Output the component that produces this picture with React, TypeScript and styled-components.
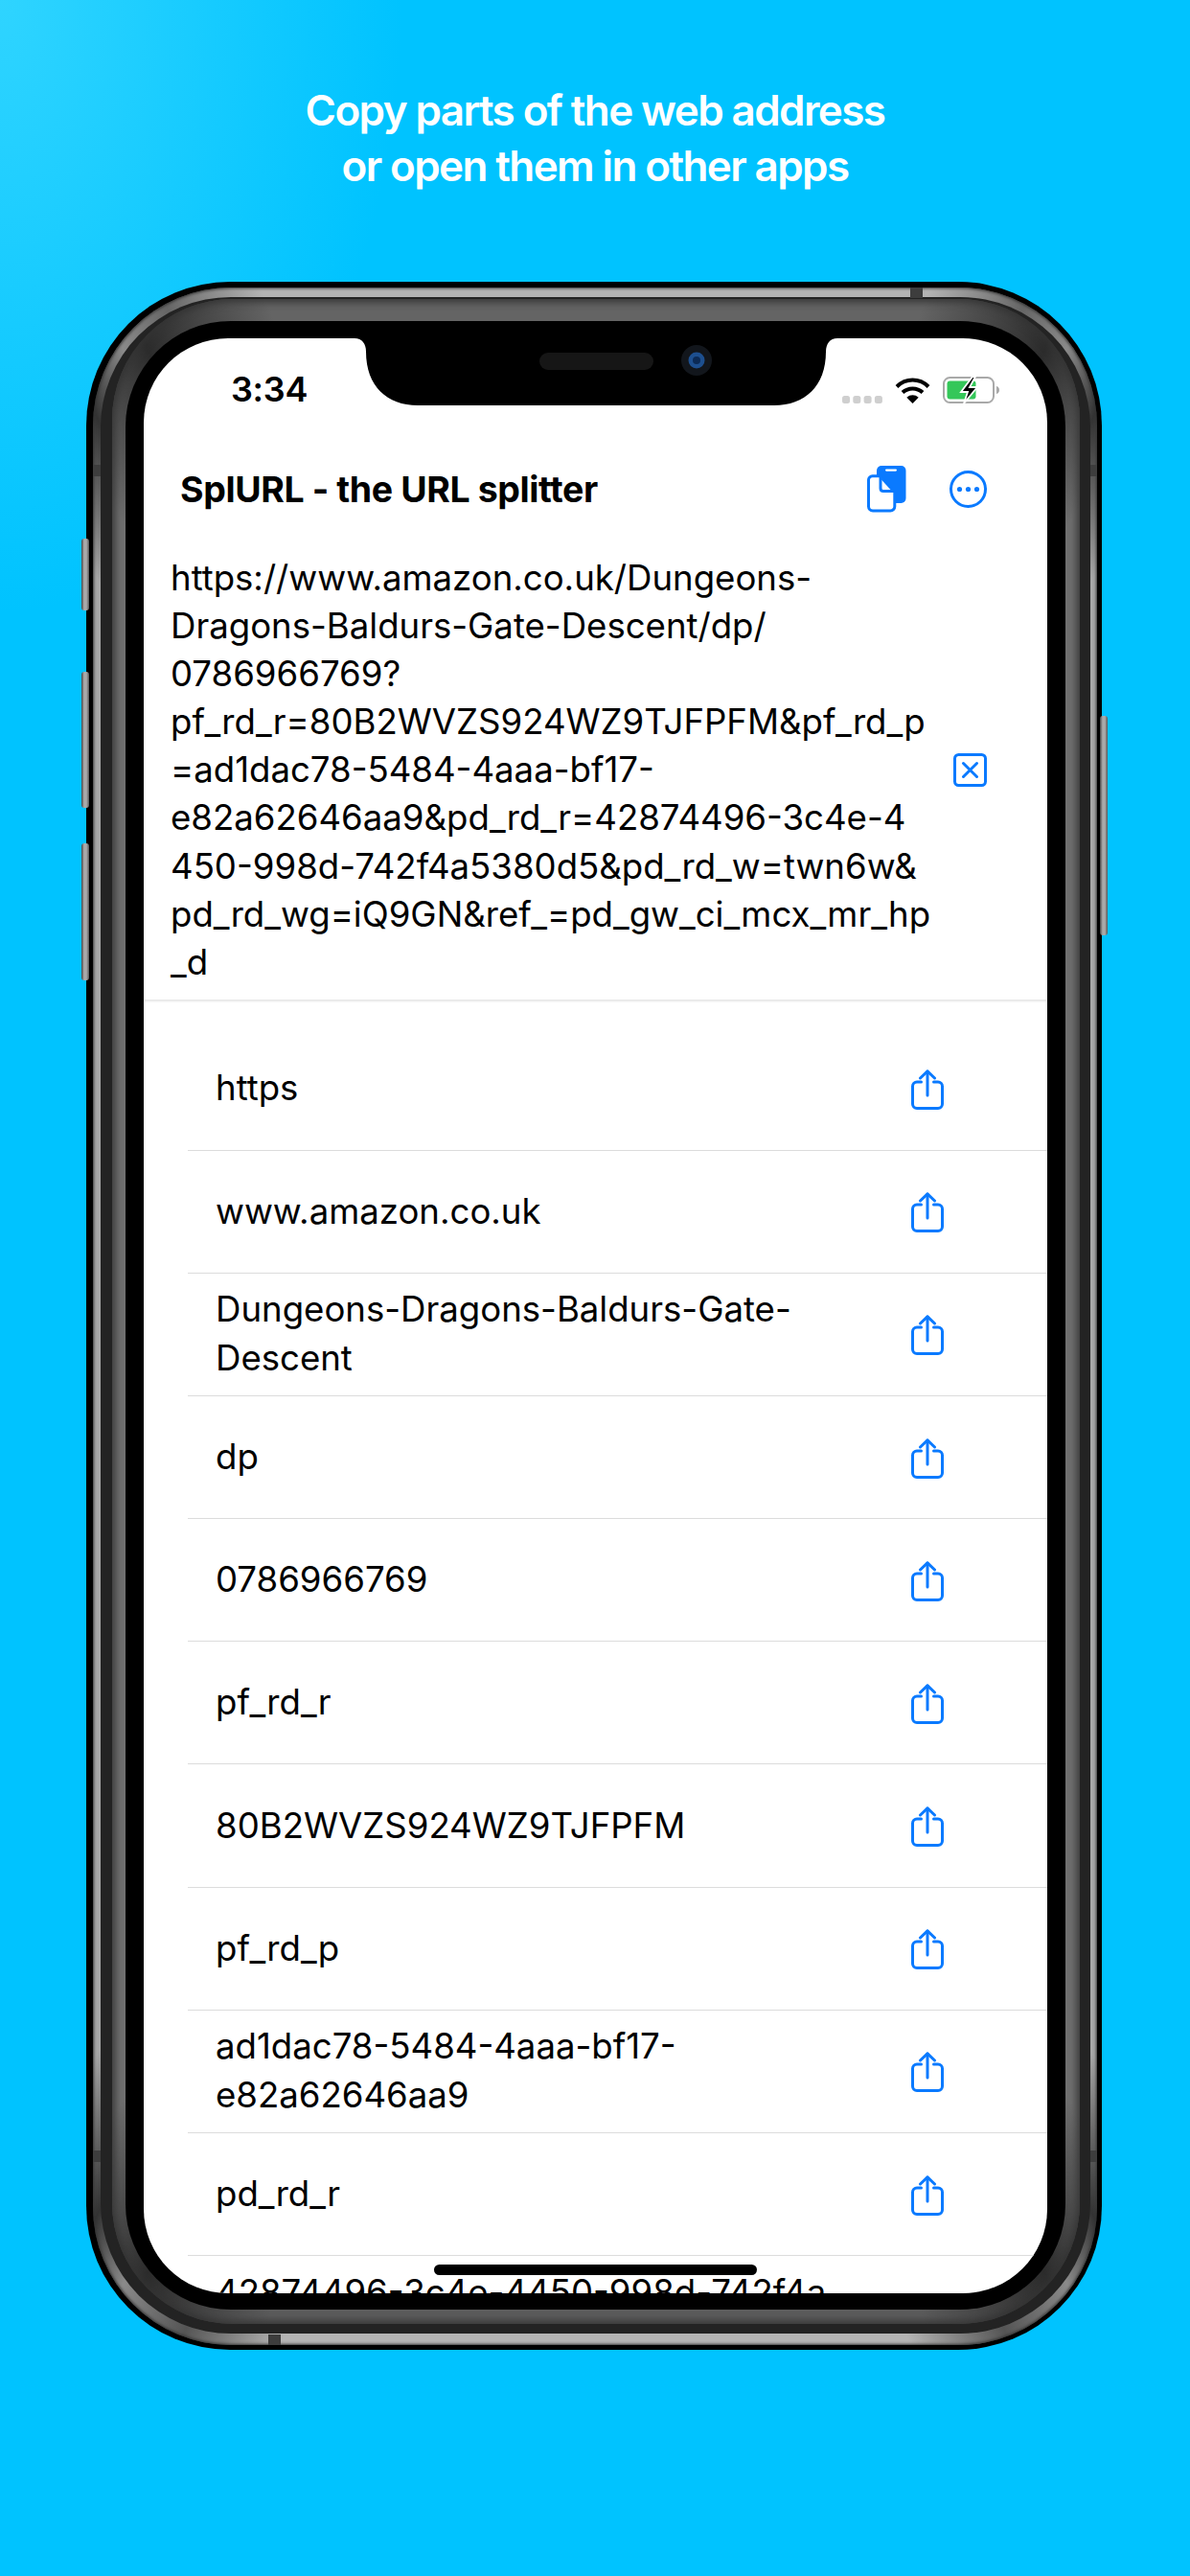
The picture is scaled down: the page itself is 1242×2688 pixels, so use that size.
import React from "react";
import styled, { createGlobalStyle } from "styled-components";

const Global = createGlobalStyle`
  html, body { margin: 0; padding: 0; background: #00c3ff; }
  * { box-sizing: border-box; }
`;

const BLUE = "#0a7aff";

const Page = styled.div`
  width: 1242px;
  height: 2688px;
  overflow: hidden;
  background:
    radial-gradient(ellipse 420px 640px at 0 0, #2fd4ff 0%, rgba(47, 212, 255, 0) 100%),
    #00c3ff;
  font-family: Inter, "Liberation Sans", sans-serif;
`;

const Headline = styled.h1`
  margin: 0;
  padding-top: 86px;
  height: 294px;
  text-align: center;
  color: #fff;
  font-size: 44px;
  line-height: 58px;
  font-weight: 600;
  letter-spacing: -1.6px;
`;

const Phone = styled.div`
  position: relative;
  width: 1060px;
  margin-left: 90px;
`;

const Shell = styled.div`
  background: #000;
  border-radius: 150px;
  padding: 6px 5px 5px 7px;
`;

const MetalBand = styled.div`
  border-radius: 144px;
  padding: 10px 7px 12px 8px;
  background: conic-gradient(
    #b4b4b4 0deg 18deg, #666 23deg, #8a8a8a 26deg, #333 29deg, #a6a6a6 34deg,
    #a6a6a6 146deg, #333 151deg, #8a8a8a 154deg, #555 158deg, #b4b4b4 163deg,
    #b4b4b4 197deg, #555 202deg, #8a8a8a 206deg, #333 209deg, #a6a6a6 214deg,
    #a6a6a6 326deg, #333 331deg, #8a8a8a 334deg, #666 337deg, #b4b4b4 342deg
  );
  box-shadow: inset 0 0 3px 1px #333;
`;

const DarkBand = styled.div`
  background: #232323;
  border-radius: 136px;
  padding: 2px 11px 10px 12px;
`;

const GreyBand = styled.div`
  border-radius: 126px;
  padding: 23px 15px 15px 14px;
  background: conic-gradient(
    #646464 0deg 18deg, #2c2c2c 25deg, #707070 31deg,
    #707070 149deg, #2c2c2c 155deg, #5c5c5c 162deg,
    #5c5c5c 198deg, #2c2c2c 205deg, #707070 211deg,
    #707070 329deg, #2c2c2c 335deg, #646464 342deg
  );
  box-shadow: inset 0 0 8px 3px #333;
`;

const BlackBezel = styled.div`
  background: #000;
  border-radius: 110px;
  padding: 18px 19.5px 17px 19px;
`;

const Screen = styled.div`
  position: relative;
  height: 2040px;
  background: #fff;
  border-radius: 88px;
  overflow: hidden;
  display: flex;
  flex-direction: column;
`;

const SideButton = styled.div<{ $top: number; $h: number; $right?: boolean }>`
  position: absolute;
  top: ${(p) => p.$top}px;
  height: ${(p) => p.$h}px;
  width: 8px;
  ${(p) => (p.$right ? "right: -6px;" : "left: -5px;")}
  border-radius: 3px;
  background: linear-gradient(90deg, #444 0%, #aaa 35%, #aaa 65%, #555 100%);
`;

const Antenna = styled.div<{ $x?: number; $y?: number; $side?: "left" | "right" }>`
  position: absolute;
  background: #3d3d3d;
  ${(p) =>
    p.$side
      ? `top: ${p.$y}px; ${p.$side === "left" ? "left: 7px; width: 8px;" : "right: 5px; width: 7px;"} height: 12px;`
      : `left: ${p.$x}px; top: ${p.$y}px; width: 13px; height: 11px;`}
`;

const Notch = styled.svg`
  position: absolute;
  left: 220px;
  top: 0;
`;

const StatusBar = styled.div`
  height: 105px;
  flex: none;
  display: flex;
  align-items: center;
  justify-content: space-between;
  padding: 0 49px 0 91px;
`;

const Time = styled.div`
  font-size: 36px;
  font-weight: 600;
  letter-spacing: -0.3px;
  color: #000;
`;

const StatusIcons = styled.div`
  display: flex;
  align-items: center;
  gap: 13px;
  margin-top: 2px;
`;

const Signal = styled.svg`
  margin-top: 20px;
`;

const TopSection = styled.div`
  position: relative;
  z-index: 1;
  flex: none;
  background: #fff;
  box-shadow: 0 2px 2px rgba(0, 0, 0, 0.1);
`;

const NavBar = styled.div`
  height: 104px;
  display: flex;
  align-items: center;
  justify-content: space-between;
  padding: 0 63px 0 38px;
`;

const Title = styled.div`
  font-size: 37.5px;
  font-weight: 700;
  letter-spacing: -0.4px;
  color: #000;
`;

const NavActions = styled.div`
  display: flex;
  align-items: center;
  gap: 45px;
`;

const UrlRow = styled.div`
  display: flex;
  align-items: center;
  justify-content: space-between;
  padding: 16px 63px 14px 28px;

  svg {
    flex: none;
  }
`;

const UrlText = styled.div`
  font-size: 36.6px;
  line-height: 50.1px;
  color: #000;
  white-space: pre;
  font-weight: 400;
`;

const RowList = styled.div`
  flex: 1;
  min-height: 0;
  overflow: hidden;
  padding: 29.5px 0 0 46px;
`;

const Row = styled.div`
  height: 128.2px;
  flex: none;
  display: flex;
  align-items: center;
  justify-content: space-between;
  padding: 0 108px 0 29px;
  border-bottom: 1.5px solid #dcdcdc;

  &:last-child {
    border-bottom: 0;
  }

  svg {
    flex: none;
    margin-top: 2px;
  }
`;

const RowText = styled.div`
  font-size: 36.6px;
  line-height: 51px;
  color: #000;
  white-space: pre-line;
`;

const HomeBar = styled.div`
  position: absolute;
  left: 303px;
  top: 2010px;
  width: 337px;
  height: 11px;
  border-radius: 6px;
  background: #000;
  z-index: 2;
`;

const ShareIcon = () => (
  <svg width="34" height="42" viewBox="0 0 34 42" fill="none" stroke={BLUE} strokeWidth="3" strokeLinecap="round" strokeLinejoin="round">
    <path d="M10.5 13H6a4.5 4.5 0 0 0-4.5 4.5V36A4.5 4.5 0 0 0 6 40.5h22a4.5 4.5 0 0 0 4.5-4.5V17.500A4.500 4.500 0 0 0 28 13h-4.500" />
    <path d="M17 2v25" />
    <path d="M9.500 9 17 1.800 24.500 9" />
  </svg>
);

const CopyIcon = () => (
  <svg width="41" height="49" viewBox="0 0 41 49">
    <rect x="10" y="0" width="30.500" height="39" rx="5" fill={BLUE} />
    <rect x="19" y="3.500" width="12" height="2.200" rx="1.100" fill="#fff" />
    <path d="M5.500 10.800H13.500L28.800 27.500V42.500a4.500 4.500 0 0 1-4.500 4.500H6a4.500 4.500 0 0 1-4.500-4.500V14.800a4 4 0 0 1 4-4Z" fill="#fff" stroke={BLUE} strokeWidth="3" strokeLinejoin="round" />
    <path d="M14 11V23.500q0 3 3 3H28.500" fill="none" stroke={BLUE} strokeWidth="3" />
  </svg>
);

const MoreIcon = () => (
  <svg width="39" height="39" viewBox="0 0 39 39">
    <circle cx="19.500" cy="19.500" r="18" fill="none" stroke={BLUE} strokeWidth="3" />
    <circle cx="10.500" cy="19.500" r="2.600" fill={BLUE} />
    <circle cx="19.500" cy="19.500" r="2.600" fill={BLUE} />
    <circle cx="28.500" cy="19.500" r="2.600" fill={BLUE} />
  </svg>
);

const ClearIcon = () => (
  <svg width="35" height="35" viewBox="0 0 35 35" fill="none" stroke={BLUE} strokeWidth="3" strokeLinecap="round">
    <rect x="1.500" y="1.500" width="32" height="32" rx="4" />
    <path d="M10.500 10.500 24.500 24.500M24.500 10.500 10.500 24.500" />
  </svg>
);

const SignalDots = () => (
  <Signal width="42" height="8" viewBox="0 0 42 8">
    {[0, 11.300, 22.600, 33.900].map((x) => (
      <rect key={x} x={x} width="8" height="8" rx="2.500" fill="#cfcfcf" />
    ))}
  </Signal>
);

const WifiIcon = () => (
  <svg width="37" height="28" viewBox="0 0 37 28" fill="none" stroke="#000" strokeWidth="4">
    <path d="M2 10.500C11.500 1.300 25.500 1.300 35 10.500" />
    <path d="M8 16.500C14 11 23 11 29 16.500" />
    <path d="M18.500 28 12.300 21.800C16 18.500 21 18.500 24.700 21.800Z" fill="#000" stroke="none" />
  </svg>
);

const BatteryIcon = () => (
  <svg width="60" height="28" viewBox="0 0 60 28">
    <rect x="1" y="1" width="52" height="26" rx="6.500" fill="none" stroke="#a9a9a9" strokeWidth="2" />
    <rect x="4.500" y="4.500" width="30" height="19" rx="3" fill="#34c759" />
    <path d="M56 10c2 .5 3 2 3 4s-1 3.500-3 4Z" fill="#a9a9a9" />
    <path d="M31 0 19 16h7l-4 12 14-17h-8l6-11Z" fill="#000" stroke="#fff" strokeWidth="1.800" strokeLinejoin="miter" />
  </svg>
);

const URL_LINES = [
  "https://www.amazon.co.uk/Dungeons-",
  "Dragons-Baldurs-Gate-Descent/dp/",
  "0786966769?",
  "pf_rd_r=80B2WVZS924WZ9TJFPFM&pf_rd_p",
  "=ad1dac78-5484-4aaa-bf17-",
  "e82a62646aa9&pd_rd_r=42874496-3c4e-4",
  "450-998d-742f4a5380d5&pd_rd_w=twn6w&",
  "pd_rd_wg=iQ9GN&ref_=pd_gw_ci_mcx_mr_hp",
  "_d",
].join("\n");

const ROWS = [
  "https",
  "www.amazon.co.uk",
  "Dungeons-Dragons-Baldurs-Gate-\nDescent",
  "dp",
  "0786966769",
  "pf_rd_r",
  "80B2WVZS924WZ9TJFPFM",
  "pf_rd_p",
  "ad1dac78-5484-4aaa-bf17-\ne82a62646aa9",
  "pd_rd_r",
  "42874496-3c4e-4450-998d-742f4a\n5380d5",
];

export default function App() {
  return (
    <Page>
      <Global />
      <Headline>
        Copy parts of the web address
        <br />
        or open them in other apps
      </Headline>
      <Phone>
        <SideButton $top={268} $h={75} />
        <SideButton $top={407} $h={142} />
        <SideButton $top={586} $h={143} />
        <SideButton $right $top={453} $h={229} />
        <Shell>
          <MetalBand>
            <DarkBand>
              <GreyBand>
                <BlackBezel>
                  <Screen>
                    <StatusBar>
                      <Time>3:34</Time>
                      <StatusIcons>
                        <SignalDots />
                        <WifiIcon />
                        <BatteryIcon />
                      </StatusIcons>
                    </StatusBar>
                    <TopSection>
                      <NavBar>
                        <Title>SplURL - the URL splitter</Title>
                        <NavActions>
                          <CopyIcon />
                          <MoreIcon />
                        </NavActions>
                      </NavBar>
                      <UrlRow>
                        <UrlText>{URL_LINES}</UrlText>
                        <ClearIcon />
                      </UrlRow>
                    </TopSection>
                    <RowList>
                      {ROWS.map((r) => (
                        <Row key={r}>
                          <RowText>{r}</RowText>
                          <ShareIcon />
                        </Row>
                      ))}
                    </RowList>
                    <HomeBar />
                    <Notch width="504" height="70" viewBox="0 0 504 70">
                      <path d="M0 0C8 0 12 6 12 14C12 50 34 70 66 70H438C470 70 492 50 492 14C492 6 496 0 504 0Z" fill="#000" />
                      <rect x="193" y="15" width="119" height="18" rx="9" fill="#161616" />
                      <circle cx="357" cy="23" r="16" fill="#12161c" />
                      <circle cx="357" cy="23" r="8.500" fill="#1d4f8f" />
                      <circle cx="357" cy="23" r="4" fill="#0c2a55" />
                    </Notch>
                  </Screen>
                </BlackBezel>
              </GreyBand>
            </DarkBand>
          </MetalBand>
        </Shell>
        <Antenna $x={860} $y={6} />
        <Antenna $x={190} $y={2142} />
        <Antenna $side="left" $y={191} />
        <Antenna $side="right" $y={191} />
        <Antenna $side="left" $y={1950} />
        <Antenna $side="right" $y={1950} />
      </Phone>
    </Page>
  );
}
